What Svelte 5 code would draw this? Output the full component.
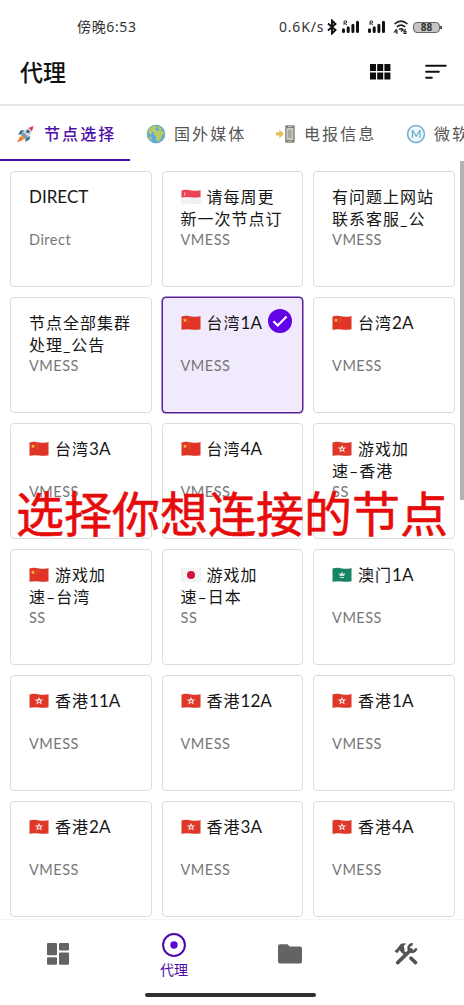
<script>
  let selected = "台湾1A";
  let activeTab = "节点选择";

  const tabs = [
    { name: "节点选择", icon: "rocket" },
    { name: "国外媒体", icon: "globe" },
    { name: "电报信息", icon: "phone" },
    { name: "微软服务", icon: "metro" }
  ];

  const nodes = [
    { lines: ["DIRECT"], type: "Direct" },
    { flag: "sg", lines: ["请每周更", "新一次节点订"], type: "VMESS" },
    { lines: ["有问题上网站", "联系客服_公"], type: "VMESS" },
    { lines: ["节点全部集群", "处理_公告"], type: "VMESS" },
    { flag: "cn", lines: ["台湾1A"], type: "VMESS" },
    { flag: "cn", lines: ["台湾2A"], type: "VMESS" },
    { flag: "cn", lines: ["台湾3A"], type: "VMESS" },
    { flag: "cn", lines: ["台湾4A"], type: "VMESS" },
    { flag: "hk", lines: ["游戏加", "速–香港"], type: "SS" },
    { flag: "cn", lines: ["游戏加", "速–台湾"], type: "SS" },
    { flag: "jp", lines: ["游戏加", "速–日本"], type: "SS" },
    { flag: "mo", lines: ["澳门1A"], type: "VMESS" },
    { flag: "hk", lines: ["香港11A"], type: "VMESS" },
    { flag: "hk", lines: ["香港12A"], type: "VMESS" },
    { flag: "hk", lines: ["香港1A"], type: "VMESS" },
    { flag: "hk", lines: ["香港2A"], type: "VMESS" },
    { flag: "hk", lines: ["香港3A"], type: "VMESS" },
    { flag: "hk", lines: ["香港4A"], type: "VMESS" }
  ];

  const flagColors = { cn: "#df3426", hk: "#df3829", mo: "#168566", jp: "#f4f2f2", sg: "#f6f0f0" };

  // CJK text is set wider than the latin letters and digits
  const split = (text) => text.match(/[0-9A-Z]+|[^0-9A-Z]+/g);
</script>

<div class="screen">
  <div class="status">
    <span class="time">傍晚6:53</span>
    <div class="status-right">
      <span class="speed">0.6K/s</span>
      <svg class="bt" width="10" height="16" viewBox="0 0 10 16"><path d="M1 4.5 8.5 11 5 14.5V1.5L8.5 5 1 11.5" fill="none" stroke="#111" stroke-width="1.9" /></svg>
      {#each [1, 2] as sim}
        <svg class="signal" width="19" height="14" viewBox="0 0 19 14">
          <path d="M2.5 11.5v-1.7M7.2 11.5V7.8M11.9 11.5V5.2M16.5 11.5V2.3" stroke="#111" stroke-width="3" stroke-linecap="round" />
          <path d="M3 5V1h2.5v2H3l3 2" stroke="#444" stroke-width="1" fill="none" />
        </svg>
      {/each}
      <svg class="wifi" width="16" height="16" viewBox="0 0 16 16">
        <path d="M1.5 5Q8-.8 14.5 5M3.8 8Q8 4.2 12.2 8M6 10.5Q8 9 10 10.5L8 12.5" fill="none" stroke="#222" stroke-width="1.5" />
        <path d="M3.5 10 1.5 13h3M4 11v4M13 10.5l-2 1v3h2v-2h-2" fill="none" stroke="#222" stroke-width="1.1" />
      </svg>
      <div class="battery"><span>88</span></div>
    </div>
  </div>

  <header>
    <h1>代理</h1>
    <svg class="grid-icon" width="21" height="16" viewBox="0 0 21 16"><path d="M0 0h6v7H0zM7.2 0h6v7h-6zM14.4 0h6v7h-6zM0 8.4h6v7H0zM7.2 8.4h6v7h-6zM14.4 8.4h6v7h-6z" fill="#0c0c0c" /></svg>
    <svg width="22" height="16" viewBox="0 0 22 16"><path d="M1.2 1.7h19.5M1.2 7.7h12.6M1.2 13.7h5.6" stroke="#111" stroke-width="2.1" stroke-linecap="round" /></svg>
  </header>

  <nav class="tabs">
    {#each tabs as tab}
      <button class:active={activeTab === tab.name} on:click={() => (activeTab = tab.name)}>
        {#if tab.icon === "rocket"}
          <svg width="20" height="20" viewBox="0 0 20 20">
            <path d="M8 6 4.5 6.5 2 11l4-1zM14 12l-.5 3.5L9 18l1-4z" fill="#30718f" />
            <path d="M5 11Q8 4 17 2.5 16 11 9 15.5z" fill="#cbd3dc" />
            <path d="M5 11 9 15.5 12 13 7.5 8z" fill="#8495a7" />
            <path d="M12.8 4 17.5 2 16 7z" fill="#e52f42" />
            <path d="M5.5 12 2 14.2l1.5.5-2 3 4.8-1.2L9 14z" fill="#f39b27" />
            <path d="M1.8 17.8 5.5 14" stroke="#e15b31" stroke-width="1.2" />
            <circle cx="12" cy="7.5" r="1.6" fill="#38546d" />
          </svg>
        {:else if tab.icon === "globe"}
          <svg width="20" height="20" viewBox="0 0 20 20">
            <circle cx="10" cy="10" r="9.2" fill="#60a8d7" />
            <path d="M3 4Q6 .8 10 1l1 2-2 2 1.5 1-1 2H6l-1 3-3-2zM8 8l5-2 4 1 1.5 3-2.5 1-1 4-3 3-2-3V12L8 11zM12 2l4 2-1 2-3-1zM3 12l2 1 1 4-3-3z" fill="#b4cb68" />
            <circle cx="10" cy="10" r="8.8" fill="none" stroke="#79a9b6" stroke-width=".8" />
          </svg>
        {:else if tab.icon === "phone"}
          <svg width="20" height="20" viewBox="0 0 20 20">
            <path d="M0 8.3h3.3V5.5L8 10l-4.7 4.2v-2.8H0z" fill="#e8bd58" />
            <rect x="9.2" y="1.2" width="9.5" height="17.5" rx="1" fill="#818177" />
            <path d="M10.5 4h6.8v12h-6.8z" fill="#c9c9c0" />
            <path d="M12 6h3.5v8H12z" fill="#aaa9a1" />
            <path d="M12 2.5h4M12.5 17.3h3" stroke="#d9d9d0" stroke-width=".8" />
          </svg>
        {:else}
          <svg width="20" height="20" viewBox="0 0 20 20">
            <circle cx="10" cy="10" r="8.4" fill="#f1f9fc" stroke="#65aed2" stroke-width="1.5" />
            <text class="metro" x="10" y="14.2" text-anchor="middle">M</text>
          </svg>
        {/if}
        <span>{tab.name}</span>
      </button>
    {/each}
  </nav>

  <main>
    <div class="grid">
      {#each nodes as node}
        <div class="card" class:selected={node.lines[0] === selected}>
          <div class="title">
            <div class="line">
              {#if node.flag}
                <svg class="flag" width="20" height="16" viewBox="0 0 20 16">
                  <path d="M.5 1.5Q5 .3 10 1.4T19.5 1v13.2q-5 1-9.5.3T.5 14.7z" fill={flagColors[node.flag]} stroke="#8882" stroke-width=".6" />
                  {#if node.flag === "sg"}
                    <path d="M.5 1.5Q5 .3 10 1.4T19.5 1v7q-5 1-9.5.3T.5 8.4z" fill="#ea4256" />
                    <path d="M5 3a2 2 0 1 0 0 4 2.5 2.5 0 0 1 0-4" fill="#f9c9cf" />
                  {:else if node.flag === "cn"}
                    <path d="m4 3 .6 1.4 1.6.1-1.2 1 .4 1.5L4 6.2 2.6 7 3 5.5l-1.2-1 1.6-.1z" fill="#f7c73c" />
                    <path d="M7.5 3h.8M8.5 5h.8M7.5 7.2h.8" stroke="#efaa36" stroke-width=".8" />
                  {:else if node.flag === "jp"}
                    <circle cx="10" cy="8" r="4" fill="#d31240" />
                  {:else if node.flag === "hk"}
                    <path d="m10 3.7 1.1 2.9 3.1-.1-2.4 2 1.1 3-2.9-1.8-2.7 1.8.9-3-2.5-2 3.2.1z" fill="#fbe3df" />
                    <circle cx="10" cy="8.2" r="1" fill="#df3829" />
                  {:else}
                    <path d="m10 4.6 1 2.2 2.4-.3-1.5 2.6H8.1L6.6 6.5l2.4.3zM7.6 10h4.8l-1 1H8.6z" fill="#cfe9dd" />
                  {/if}
                </svg>
              {/if}
              {#each split(node.lines[0]) as part}
                <span class:latin={/[0-9A-Z]/.test(part)}>{part}</span>
              {/each}
            </div>
            {#if node.lines[1]}
              <div class="line">{node.lines[1]}</div>
            {/if}
          </div>
          <div class="type">{node.type}</div>
          {#if node.lines[0] === selected}
            <svg class="check" width="24" height="24" viewBox="0 0 24 24">
              <circle cx="12" cy="12" r="12" fill="#6202e6" />
              <path d="m5.4 12.3 4.3 4.2 8.9-9.1" fill="none" stroke="#fff" stroke-width="2.2" />
            </svg>
          {/if}
        </div>
      {/each}
    </div>
    <div class="scrollbar"></div>
    <div class="caption">选择你想连接的节点</div>
  </main>

  <nav class="bottom">
    <div class="item">
      <svg width="22" height="22" viewBox="0 0 22 22" fill="#636363"><rect width="10" height="12.3" rx="1" /><rect x="12" width="10" height="7.5" rx="1" /><rect y="14.3" width="10" height="7.5" rx="1" /><rect x="12" y="9.6" width="10" height="12.2" rx="1" /></svg>
    </div>
    <div class="item current">
      <svg width="24" height="24" viewBox="0 0 24 24"><circle cx="12" cy="12" r="10.9" fill="none" stroke="#4c0ba8" stroke-width="2" /><circle cx="12" cy="12" r="3.7" fill="#5d08d0" /></svg>
      <span>代理</span>
    </div>
    <div class="item">
      <svg width="24" height="20" viewBox="0 0 24 20"><path d="M2 .2h7.4l2.4 2.3H22q2 0 2 2v13q0 2-2 2H2q-2 0-2-2V2.2q0-2 2-2" fill="#636363" /></svg>
    </div>
    <div class="item">
      <svg width="24" height="24" viewBox="0 0 24 24">
        <path d="M.5 9.3 3 6.7 6.3 2.6Q8.5.7 12 1.6L9.7 4l1 4-2.4 3-2.8-2.8-2.2 3z" fill="#535353" />
        <path d="M3.7 20.6 17 7.8M17 16.2l4.5 4.4" stroke="#535353" stroke-width="3.6" stroke-linecap="round" />
        <path d="m8 8.7 3.2 3.2" stroke="#535353" stroke-width="3" />
        <path d="M18.7 2.4a3.7 3.7 0 1 0 3.3 3.8" fill="none" stroke="#535353" stroke-width="2.7" />
      </svg>
    </div>
  </nav>
  <div class="home"></div>
</div>

<style>
  :global(body) {
    margin: 0;
    background: #fff;
  }
  .screen {
    width: 464px;
    height: 1005px;
    overflow: hidden;
    display: flex;
    flex-direction: column;
    background: #fff;
    color: #161616;
    font-family: Lato, "Noto Sans CJK SC", sans-serif;
  }
  .status {
    height: 40px;
    flex: none;
    box-sizing: border-box;
    padding: 14px 24px 0 77px;
    display: flex;
    justify-content: space-between;
    font-family: "Noto Sans", "Noto Sans CJK SC", sans-serif;
    font-size: 14px;
    line-height: 26px;
    color: #333;
  }
  .time { letter-spacing: 0.65px; }
  .status-right { display: flex; align-items: center; height: 26px; }
  .speed { width: 47px; letter-spacing: 0.8px; white-space: nowrap; }
  .bt { margin: 0 4px 0 1px; }
  .signal { margin-right: 7px; }
  .wifi { margin-right: 4px; }
  .battery {
    position: relative;
    width: 25px;
    height: 9px;
    border: 1px solid #666;
    border-radius: 4px;
    background: #c5c5c5;
    color: #333;
    font-size: 10px;
    font-weight: bold;
    line-height: 9px;
    text-align: center;
  }
  .battery::after {
    content: "";
    position: absolute;
    right: -3px;
    top: 3px;
    width: 2px;
    height: 3px;
    background: #555;
  }
  header {
    height: 64px;
    flex: none;
    box-sizing: border-box;
    padding: 0 17px 0 20px;
    display: flex;
    align-items: center;
  }
  h1 {
    flex: 1;
    margin: 0;
    font-size: 23px;
    font-weight: 500;
    line-height: 34px;
    color: #111;
  }
  .grid-icon { margin-right: 34px; }
  .tabs {
    height: 57px;
    flex: none;
    box-sizing: border-box;
    border-top: 2px solid #e6e6e6;
    display: flex;
    overflow: hidden;
  }
  .tabs button {
    width: 130px;
    flex: none;
    padding: 2px 0 0 16px;
    border: 0;
    border-bottom: 2px solid transparent;
    background: none;
    display: flex;
    align-items: center;
    gap: 8px;
    font: 400 16px/24px Lato, "Noto Sans CJK SC", sans-serif;
    letter-spacing: 2.1px;
    color: #555;
    white-space: nowrap;
  }
  .tabs svg { flex: none; }
  .metro { font-size: 11.5px; letter-spacing: 0; fill: #4e9fc8; }
  .tabs .active {
    border-bottom-color: #4b0ba3;
    color: #5010aa;
    font-weight: 500;
  }
  main {
    position: relative;
    height: 758px;
    flex: none;
    box-sizing: border-box;
    padding: 10px 9px 0 10px;
  }
  .grid {
    display: grid;
    grid-template-columns: repeat(3, 1fr);
    grid-auto-rows: 116px;
    gap: 10px 9.6px;
  }
  .card {
    position: relative;
    box-sizing: border-box;
    padding: 14px 10px 0 18px;
    border: 1px solid #dcdcdc;
    border-radius: 4px;
    background: #fff;
  }
  .card.selected {
    border-color: #572095;
    background: #f1eafd;
    box-shadow: 0 0 0 0.5px #572095;
  }
  .title {
    height: 43px;
    font-size: 16px;
    letter-spacing: 1px;
    white-space: nowrap;
  }
  .line { display: flex; align-items: center; height: 22px; line-height: 22px; }
  .latin { font-size: 17px; letter-spacing: 0; }
  .flag { flex: none; margin-right: 6px; }
  .type { color: #777; font-size: 14.5px; line-height: 22px; letter-spacing: 0.5px; }
  .check { position: absolute; top: 11px; right: 10px; }
  .scrollbar {
    position: absolute;
    top: 0;
    right: 0;
    width: 4px;
    height: 339px;
    background: #b2b2b2;
  }
  .caption {
    position: absolute;
    top: 318px;
    left: 16px;
    color: #e60c0c;
    font-size: 48px;
    line-height: 70px;
    -webkit-text-stroke: 0.6px #e60c0c;
    white-space: nowrap;
  }
  .bottom {
    height: 68px;
    flex: none;
    box-sizing: border-box;
    border-top: 1px solid #f5f5f5;
    display: flex;
  }
  .item {
    flex: 1;
    display: flex;
    flex-direction: column;
    align-items: center;
    justify-content: center;
  }
  .current { padding-top: 5px; color: #4c0ba8; font-size: 14px; line-height: 20px; }
  .current span { margin-top: 3px; }
  .home {
    flex: none;
    width: 171px;
    height: 4px;
    margin: 6px 0 0 145px;
    border-radius: 2px;
    background: #303030;
  }
</style>
